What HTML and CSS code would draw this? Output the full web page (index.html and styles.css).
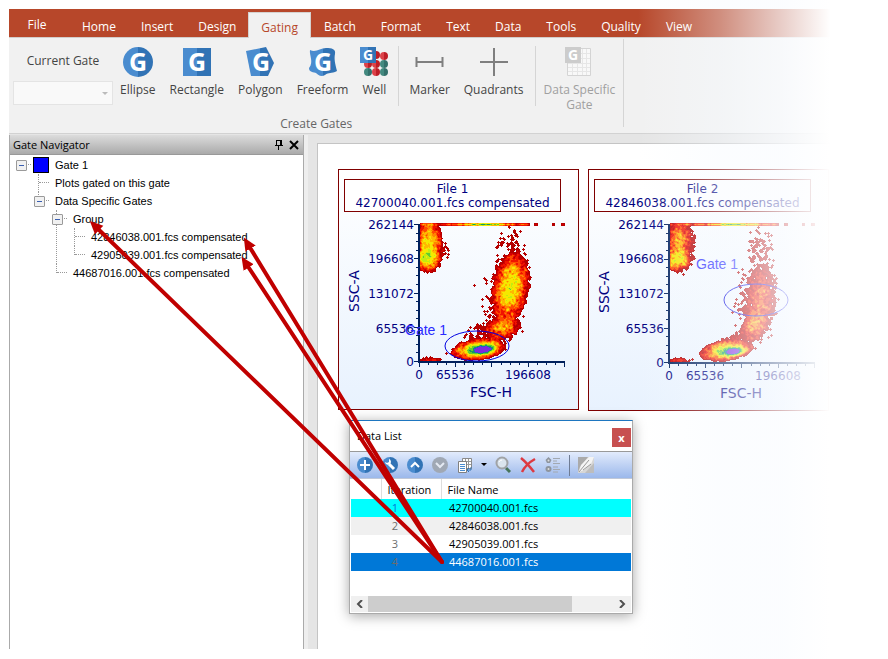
FILE: index.html
```html
<!DOCTYPE html>
<html lang="en">
<head>
<meta charset="utf-8">
<title>Gate Navigator</title>
<link rel="stylesheet" href="styles.css">
</head>
<body>
<svg width="0" height="0" class="defs" aria-hidden="true">
  <defs>
    <linearGradient id="half"><stop offset=".5" stop-color="#4a8ccf"/><stop offset=".5" stop-color="#3173b5"/></linearGradient>
    <linearGradient id="redhalf"><stop offset=".5" stop-color="#dc4249"/><stop offset=".5" stop-color="#be1e27"/></linearGradient>
    <linearGradient id="tealhalf"><stop offset=".5" stop-color="#43897f"/><stop offset=".5" stop-color="#33706b"/></linearGradient>
    <circle id="red" r="4" fill="url(#redhalf)"/>
    <circle id="teal" r="4" fill="url(#tealhalf)"/>
  </defs>
</svg>
<div class="app">
  <header>
    <nav class="tabs">
      <a class="file" href="#">File</a><a href="#">Home</a><a href="#">Insert</a><a href="#">Design</a><a class="active" href="#">Gating</a><a href="#">Batch</a><a href="#">Format</a><a href="#">Text</a><a href="#">Data</a><a href="#">Tools</a><a href="#">Quality</a><a href="#">View</a>
    </nav>
    <div class="ribbon">
      <section class="group">
        <div class="tools">
          <div class="current">
            <label for="gate">Current Gate</label>
            <div class="combo"><select id="gate" disabled><option></option></select></div>
          </div>
          <button class="tool"><svg width="32" height="32"><circle cx="16" cy="16" r="15" fill="url(#half)"/><text class="g" x="16" y="25">G</text></svg>Ellipse</button>
          <button class="tool"><svg width="32" height="32"><path d="M2 2h28v28H2z" fill="url(#half)"/><text class="g" x="16" y="25">G</text></svg>Rectangle</button>
          <button class="tool"><svg width="32" height="32"><path d="M2 5 22 1l8 16-6 13H7z" fill="url(#half)"/><text class="g" x="17" y="25">G</text></svg>Polygon</button>
          <button class="tool"><svg width="32" height="32"><path d="M3 4C9 7 13 2 19 2S29 3 28 8C27 13 28 17 30 25C24 28 22 26 18 29S10 28 9 27C4 26 2 25 2 22C7 16 2 9 3 4z" fill="url(#half)"/><text class="g" x="16" y="25">G</text></svg>Freeform</button>
          <button class="tool"><svg width="32" height="32"><use href="#red" x="18" y="9"/><use href="#red" x="26" y="10"/><use href="#red" x="10" y="18"/><use href="#red" x="18" y="18"/><use href="#teal" x="26" y="18"/><use href="#teal" x="10" y="26"/><use href="#red" x="18" y="26"/><use href="#teal" x="26" y="26"/><path d="M2 1h16v16H2z" fill="url(#half)"/><text class="g small" x="10" y="14">G</text></svg>Well</button>
          <span class="rule"></span>
          <button class="tool"><svg width="32" height="32"><path d="M2.500 11v10M28.500 11v10M2 16h27" stroke="#7f7f7f" stroke-width="2" fill="none"/></svg>Marker</button>
          <button class="tool"><svg width="32" height="32"><path d="M16 2v28M2 16h28" stroke="#7f7f7f" stroke-width="2"/></svg>Quadrants</button>
          <span class="rule"></span>
          <button class="tool wide" disabled><svg width="32" height="32"><path d="M4.500 2.500h23v27h-23z" fill="#f8f8f8" stroke="#d4d4d4"/><path d="M5 7.500h22M5 12.500h22M5 17.500h22M5 21.500h22M5 25.500h22M9.500 3v26M14.500 3v26M19.500 3v26M23.500 3v26" stroke="#e6e6e6"/><path d="M2 1h16v16H2z" fill="#ccc"/><text class="g small" x="10" y="14">G</text></svg>Data Specific Gate</button>
        </div>
        <h2>Create Gates</h2>
      </section>
    </div>
  </header>

  <div class="work">
    <aside class="navigator">
      <div class="nav-head"><h2>Gate Navigator</h2>
        <button aria-label="Pin"><svg width="10" height="10"><path d="M2.500 0v6M2 .5h6M6.500 0v6M7.500 0v6M1 5.500h8M4.500 6v4" stroke="#000"/></svg></button>
        <button aria-label="Close"><svg width="10" height="10"><path d="m1 1 8 8M9 1 1 9" stroke="#000" stroke-width="2"/></svg></button>
      </div>
      <ul class="tree">
        <li><div class="row open gate"><i class="swatch"></i>Gate 1</div>
          <ul>
            <li><div class="row">Plots gated on this gate</div></li>
            <li><div class="row open">Data Specific Gates</div>
              <ul>
                <li><div class="row open">Group</div>
                  <ul>
                    <li><div class="row">42846038.001.fcs compensated</div></li>
                    <li><div class="row">42905039.001.fcs compensated</div></li>
                  </ul>
                </li>
                <li><div class="row">44687016.001.fcs compensated</div></li>
              </ul>
            </li>
          </ul>
        </li>
      </ul>
    </aside>
    <main>
      <div class="sheet">
        <figure class="plot">
          <figcaption>File 1<br>42700040.001.fcs compensated</figcaption>
          <svg width="239" height="198" data-plot="0">
            <g class="dots" shape-rendering="crispEdges"></g>
            <path class="axis" d="M80 13v139M79 151h147"/><path class="ticks"/>
            <g class="num"><text x="75" y="18">262144</text><text x="75" y="52">196608</text><text x="75" y="87">131072</text><text x="75" y="122">65536</text><text x="75" y="155">0</text></g>
            <g class="mid"><text x="80" y="168">0</text><text x="116" y="168">65536</text><text x="189" y="168">196608</text><text class="name" x="152" y="186">FSC-H</text><text class="name" transform="translate(20 80) rotate(-90)">SSC-A</text></g>
            <ellipse class="ring" cx="138" cy="135" rx="32" ry="15"/><text class="label" x="66" y="124">Gate 1</text>
          </svg>
        </figure>
        <figure class="plot">
          <figcaption>File 2<br>42846038.001.fcs compensated</figcaption>
          <svg width="239" height="199" data-plot="1">
            <g class="dots" shape-rendering="crispEdges"></g>
            <path class="axis" d="M80 13v140M79 152h147"/><path class="ticks"/>
            <g class="num"><text x="75" y="18">262144</text><text x="75" y="52">196608</text><text x="75" y="87">131072</text><text x="75" y="122">65536</text><text x="75" y="156">0</text></g>
            <g class="mid"><text x="80" y="169">0</text><text x="116" y="169">65536</text><text x="189" y="169">196608</text><text class="name" x="152" y="187">FSC-H</text><text class="name" transform="translate(20 81) rotate(-90)">SSC-A</text></g>
            <ellipse class="ring" cx="167" cy="89" rx="32" ry="16"/><text class="label" x="107" y="58">Gate 1</text>
          </svg>
        </figure>
      </div>
    </main>
  </div>
  <div class="fade"></div>
</div>

<section class="window">
  <div class="title"><h2>Data List</h2><button aria-label="Close">x</button></div>
  <div class="bar">
    <button aria-label="Add"><svg width="18" height="18"><circle cx="9" cy="9" r="8" fill="url(#half)"/><path d="M9 4v10M4 9h10" stroke="#fff" stroke-width="2"/></svg></button>
    <button aria-label="Settings"><svg width="18" height="18"><circle cx="9" cy="9" r="8" fill="url(#half)"/><path d="m8 8 5 5" stroke="#fff" stroke-width="3"/><path d="M4 6a3 3 0 0 0 5 2 3 3 0 0 0-1-5v3L6 7z" fill="#fff"/></svg></button>
    <button aria-label="Move up"><svg width="18" height="18"><circle cx="9" cy="9" r="8" fill="url(#half)"/><path d="m5 11 4-4 4 4" stroke="#fff" stroke-width="2" fill="none"/></svg></button>
    <button aria-label="Move down"><svg width="18" height="18"><circle cx="9" cy="9" r="8" fill="#a0a8b4"/><path d="m5 7 4 4 4-4" stroke="#e4e9f2" stroke-width="2" fill="none"/></svg></button>
    <button aria-label="Copy"><svg width="18" height="18"><path d="M6.500 2.500h9v10h-9z" fill="#fff" stroke="#8a8a8a"/><path d="M7 5.500h8M7 8.500h8M9.500 3v9M12.500 3v9" stroke="#999"/><path d="M2.500 5.500h8v11h-8z" fill="#fff" stroke="#808080"/><path d="M4 8.500h5M4 10.500h5M4 12.500h5M4 14.500h5" stroke="#4a8ccf"/><path d="M15 11v3h-3m1-2-2 2 2 2" stroke="#3173b5" fill="none"/></svg></button>
    <button class="drop" aria-label="Copy options"><svg width="6" height="4"><path d="M0 0h6L3 3z"/></svg></button>
    <button aria-label="Find"><svg width="18" height="18"><path d="m12 12 4 4" stroke="#47745a" stroke-width="3"/><circle cx="8" cy="7" r="5.500" fill="#dbe5ee" stroke="#a0a3a6" stroke-width="2"/><path d="M5 6q1-2 3-2" stroke="#fff" fill="none"/></svg></button>
    <button aria-label="Delete"><svg width="18" height="18"><path d="M2 2q6 5 13 14M16 3Q7 8 3 16" stroke="#dd3a42" stroke-width="2.500" fill="none"/></svg></button>
    <button aria-label="Order"><svg width="18" height="18"><path d="m4.500 1 3 3-1.500 3h-3L1.500 4z" fill="#8e959e"/><circle cx="4.500" cy="13" r="3" fill="#8e959e"/><circle cx="4.500" cy="4.500" r="1" fill="#ddd"/><circle cx="4.500" cy="13" r="1" fill="#ddd"/><path d="M9 2.500h7M9 5h4M9 7.500h7M9 11h5M9 13.500h7M9 16h5" stroke="#a2a8b0"/></svg></button>
    <span class="split"></span>
    <button aria-label="Highlight"><svg width="18" height="18"><path d="M1 1h16v16H1z" fill="#d6d6d6"/><path d="M1 1h10L3 11l-2 5z" fill="#aaa"/><path d="M8 17h9V7z" fill="#bdbdbd"/><path d="m2 16 2-7 8-8h5l-3 7-7 6z" fill="#f4f4f4"/><path d="M2 16 12 4M6 14l8-6" stroke="#999" fill="none"/></svg></button>
  </div>
  <table>
    <thead><tr><th></th><th>Iteration</th><th>File Name</th></tr></thead>
    <tbody>
      <tr class="cyan"><td></td><td>1</td><td>42700040.001.fcs</td></tr>
      <tr class="alt"><td></td><td>2</td><td>42846038.001.fcs</td></tr>
      <tr><td></td><td>3</td><td>42905039.001.fcs</td></tr>
      <tr class="picked"><td></td><td>4</td><td>44687016.001.fcs</td></tr>
    </tbody>
  </table>
  <div class="scroll">
    <button aria-label="Scroll left"><svg width="7" height="8"><path d="M6 0 2 4l4 4" stroke="#505050" stroke-width="2" fill="none"/></svg></button>
    <span class="track"><span class="thumb"></span></span>
    <button aria-label="Scroll right"><svg width="7" height="8"><path d="m1 0 4 4-4 4" stroke="#505050" stroke-width="2" fill="none"/></svg></button>
  </div>
</section>

<svg class="arrows" width="660" height="600" aria-hidden="true">
  <defs><marker id="tip" markerUnits="userSpaceOnUse" markerWidth="14" markerHeight="14" refX="3" refY="6" orient="auto"><path d="M0 0 13 6 0 12z" fill="#c00000"/></marker></defs>
  <path d="M442 562 97 228" marker-end="url(#tip)"/>
  <path d="M442 562 249 246" marker-end="url(#tip)"/>
  <path d="M442 562 247 265" marker-end="url(#tip)"/>
</svg>
<script src="plots.js"></script>
</body>
</html>
```
FILE: styles.css
```css
* { box-sizing: border-box; }
body { margin: 0; background: #fff; font: 12px/16px "Open Sans", "Noto Sans", sans-serif; color: #444; }
h2, ul, figure { margin: 0; padding: 0; font: inherit; list-style: none; }
button { border: 0; background: none; padding: 0; font: inherit; color: inherit; }
svg { display: block; }
.defs { position: absolute; }
.app { position: relative; display: flex; flex-direction: column; height: 100vh; min-height: 600px; padding: 9px 0 10px 9px; overflow: hidden; }

.tabs { display: flex; align-items: flex-end; height: 29px; background: #b7472a; border-bottom: 1px solid #d2cdcb; }
.tabs a { height: 25px; padding: 7px 12px 0 13px; color: #fff; text-decoration: none; }
.tabs .file { width: 60px; padding: 5px 4px 0 0; text-align: center; }
.tabs .active { height: 26px; margin-bottom: -1px; padding: 7px 12px 0; background: #f1f1f1; border: 1px solid #d5d2d0; border-bottom: 0; color: #b7472a; }
.ribbon { display: flex; height: 96px; background: #f1f1f1; border-bottom: 1px solid #d2d2d2; }
.group { display: flex; flex-direction: column; margin: 1px 0 6px; padding-top: 7px; border-right: 1px solid #d5d5d5; }
.group h2 { text-align: center; color: #666; margin-top: auto; margin-bottom: -5px; }
.tools { display: flex; align-items: flex-start; padding: 0 4px; }
.current { width: 100px; text-align: center; padding-top: 7px; }
.combo { position: relative; margin-top: 12px; }
.combo select { display: block; width: 100%; height: 24px; appearance: none; background: #fdfdfd; border: 1px solid #dfdfdf; }
.combo::after { content: ""; position: absolute; right: 5px; top: 11px; border: 3px solid transparent; border-top-color: #bbb; border-bottom: 0; }
.tool { display: flex; flex-direction: column; align-items: center; line-height: 15px; padding: 0 7px; }
.tool svg { margin: 0 -4px 4px; overflow: visible; }
.tool.wide { width: 80px; padding: 0; color: #a0a0a0; }
.rule { width: 1px; height: 60px; background: #d5d5d5; margin: 0 3px 0 5px; }
.g { font: bold 25px "Open Sans", sans-serif; fill: #fff; text-anchor: middle; }
.g.small { font-size: 14px; }

.work { display: flex; flex: 1; min-height: 0; padding-top: 1px; background: #e5e5e5; }
.navigator { width: 295px; flex: none; background: #fff; border: solid #aaa; border-width: 0 1px; color: #000; font: 11px/18px "Liberation Sans", Arial, sans-serif; }
.nav-head { display: flex; align-items: center; gap: 5px; height: 20px; padding: 0 4px 0 3px; background: linear-gradient(#dcdcdc, #aaa); border-bottom: 1px solid #999; font: 11px/18px "Open Sans", sans-serif; }
.nav-head h2 { flex: 1; }
.tree { padding: 1px 0 0 10px; }
.tree ul { margin-left: 18px; }
.tree li { position: relative; }
.tree li li::before { content: ""; position: absolute; left: 0; top: 0; bottom: 0; border-left: 1px dotted #999; }
.tree li li:last-child::before { bottom: auto; height: 9px; }
.row { position: relative; height: 18px; padding-left: 17px; }
.row::before { content: ""; position: absolute; left: 1px; top: 8px; width: 10px; border-top: 1px dotted #999; }
.open::after { content: ""; position: absolute; left: -4px; top: 4px; width: 9px; height: 9px; border: 1px solid #9a9a9a; border-radius: 1px; background: linear-gradient(#3a5fb0, #3a5fb0) center / 5px 1px no-repeat #f1f1f1; }
.gate { display: flex; align-items: center; gap: 6px; padding-left: 13px; }
.swatch { width: 16px; height: 16px; background: #00f; border: 1px solid #000; }
main { flex: 1; min-width: 0; display: flex; padding: 8px 0 0 9px; border-left: 4px solid #eee; }
.sheet { flex: 1; min-width: 0; display: flex; align-items: flex-start; gap: 9px; padding: 25px 0 0 20px; background: #fff; border: solid #c4c4c4; border-width: 1px 0 0 1px; overflow: hidden; }
.plot { flex: none; border: 1px solid #800000; background: linear-gradient(#fff, #e8f2fe); color: #000080; font: 12px/14px "DejaVu Sans", Verdana, sans-serif; }
.plot figcaption { width: 217px; height: 33px; margin: 9px 0 0 5px; padding-top: 2px; border: 1px solid #800000; background: #fff; text-align: center; white-space: nowrap; }
.plot svg { margin-top: -1px; }
.plot text { fill: #000080; }
.num { text-anchor: end; }
.mid { text-anchor: middle; }
.plot .name { font-size: 14px; }
.plot .label { font: 14px "Liberation Sans", Arial, sans-serif; fill: #2a2aff; }
.axis { stroke: #00205c; stroke-width: 2; fill: none; }
.ticks { stroke: #00205c; }
.ring { fill: none; stroke: #0000e0; }
.fade { position: absolute; inset: 0 0 0 auto; width: 250px; pointer-events: none; background: linear-gradient(90deg, rgba(246,250,255,0), rgba(246,250,255,.4) 33%, rgba(250,252,255,.75) 58%, #fff 77%); }

.window { position: absolute; left: 349px; top: 420px; width: 284px; padding: 0 1px 1px; background: #fff; border: 1px solid #aaa; border-top-color: #1e76c0; box-shadow: 0 2px 12px rgba(0,0,0,.35); color: #000; font-size: 11px; line-height: 18px; }
.title { display: flex; justify-content: space-between; align-items: center; height: 30px; padding: 0 0 0 6px; }
.title button { width: 19px; height: 19px; margin-top: 3px; background: #c75050; color: #fff; font-weight: bold; line-height: 16px; }
.bar { display: flex; align-items: center; gap: 7px; height: 28px; margin: 0 -1px; padding: 0 6px; background: linear-gradient(#e2ebfc, #9bb8eb); border-top: 1px solid #999; border-bottom: 1px solid #c0c8d8; }
.split { width: 1px; height: 21px; background: #6f7c94; }
table { width: 100%; border-collapse: collapse; table-layout: fixed; }
th, td { height: 18px; padding: 0; font-weight: normal; text-align: left; }
th { height: 20px; border-right: 1px solid #ddd; padding: 1px 0 0 6px; }
th:last-child { border: 0; }
th:first-child { width: 30px; }
th:nth-child(2) { width: 60px; }
td:nth-child(2) { padding-right: 43px; text-align: right; color: #6c6c6c; }
td:nth-child(3) { padding-left: 8px; }
.cyan { background: #0ff; }
.cyan td:nth-child(2) { color: #0078d7; }
.alt { background: #f0f0f0; }
.picked { background: #0078d7; color: #fff; }
.scroll { display: flex; height: 16px; margin-top: 25px; background: #f0f0f0; }
.scroll button { width: 17px; display: grid; place-items: center; }
.track { flex: 1; display: flex; }
.thumb { width: 83%; background: #cdcdcd; }
.arrows { position: absolute; left: 0; top: 0; pointer-events: none; stroke: #c00000; stroke-width: 4; stroke-linecap: round; fill: none; }
.arrows marker { stroke: none; }
```
FILE: plots.js
```js
const W = 146, H = 139, LEFT = 81, TOP = 12;
// Each cluster: x, y, spread x, spread y, events, slope, cut-off radius
const clusters = [
  [
    [6, 35, 7, 6, 1200, 0, 2.000], [8, 16, 6, 10, 1100, 0, 2.200], [9, 24, 7, 13, 800, 0, 2],
    [90, 64, 8, 16, 3600, -0.120, 2.200], [90, 60, 10, 20, 600, -0.100, 2.000], [84, 84, 10, 14, 150, 0, 2.500],
    [89, 20, 7, 9, 45, 0, 2.500], [83, 104, 8, 6, 800, -0.200, 2.100], [66, 109, 12, 7, 170, -0.300, 2],
    [58, 126, 12, 4.500, 2300, -0.100, 2.200], [62, 126, 7, 2.500, 1500, -0.120, 2.200], [63, 126, 4, 1.500, 700, -0.100, 2], [56, 123, 15, 5, 250, -0.200, 2],
    [8, 137, 8, 1.500, 60, -0.100, 2], [70, 80, 8, 25, 22, 0, 3], [24, 30, 3, 8, 14, 0, 2]
  ],
  [
    [6, 36, 7, 5.500, 1000, 0, 2.000], [8, 16, 6, 10, 800, 0, 2.200], [11, 24, 7, 13, 500, 0, 2.100],
    [90, 76, 7, 16, 1000, -0.050, 2.200], [87, 70, 9, 24, 280, 0, 2.400], [90, 25, 7, 10, 60, 0, 2.500],
    [84, 102, 6, 7, 600, -0.200, 2.200], [74, 90, 7, 12, 35, 0, 2],
    [56, 127, 12, 4.500, 1900, -0.120, 2.200], [62, 128, 7, 2.500, 1200, -0.120, 2.200], [63, 128, 4, 1.500, 500, -0.100, 2], [60, 120, 15, 5, 180, -0.300, 2],
    [8, 137, 8, 1, 50, 0, 2]
  ]
];
const palette = [[0.28, "#b40000"], [1.2, "#d40000"], [2, "#f01400"], [3.4, "#ff4a00"], [5, "#ff8500"],
  [6.6, "#ffb800"], [8.6, "#f5e800"], [12.5, "#c4ec10"], [16, "#62cc30"], [22, "#159b60"], [29, "#2060c8"], [36, "#7b2be0"]];

let seed = 7;
const rand = () => (seed = (seed * 16807) % 2147483647) / 2147483647;
const normal = () => Math.sqrt(-2 * Math.log(rand())) * Math.cos(6.28318 * rand());

function density(list) {
  const raw = new Float32Array(W * H);
  const add = (x, y, v) => {
    x = Math.round(x); y = Math.round(y);
    if (x >= 0 && y >= 0 && x < W && y < H) raw[y * W + x] += v;
  };
  for (const [cx, cy, sx, sy, n, slope, cut] of list)
    for (let i = 0; i < n; i++) {
      let u, v;
      do { u = normal(); v = normal(); } while (Math.hypot(u, v) > cut);
      // Lopsided offset keeps sloped populations leaning
      const steep = sy > sx;
      add(cx + u * sx + (steep ? slope * v * sy : 0), cy + v * sy + (steep ? 0 : slope * u * sx), 1);
    }
  for (let i = 0; i < 330; i++) add(rand() * 108, 1, 1);
  for (let i = 0; i < 500; i++) add(64 + normal() * 13, 1, 1);
  for (const x of [115, 116, 133, 142, 143]) add(x, 1, 2);
  const out = new Float32Array(W * H);
  for (let y = 0; y < H; y++) for (let x = 0; x < W; x++) {
    let s = 0;
    for (let j = -1; j < 2; j++) for (let i = -1; i < 2; i++) {
      const a = x + i, b = y + j;
      if (a >= 0 && b >= 0 && a < W && b < H) s += raw[b * W + a] * (2 - Math.abs(i)) * (2 - Math.abs(j)) / 7;
    }
    out[y * W + x] = s;
  }
  return out;
}

document.querySelectorAll("[data-plot]").forEach(svg => {
  const k = +svg.dataset.plot, grid = density(clusters[k]), paths = palette.map(() => "");
  for (let y = 0; y < H; y++) for (let x = 0; x < W; x++) {
    let c = -1;
    while (c + 1 < palette.length && grid[y * W + x] >= palette[c + 1][0]) c++;
    if (c >= 0) paths[c] += `M${LEFT + x} ${TOP + y}h1v1h-1z`;
  }
  svg.querySelector(".dots").innerHTML = paths.map((d, i) => `<path d="${d}" fill="${palette[i][1]}"/>`).join("");
  let t = "";
  for (let i = 0; i <= 16; i++) {
    const len = i % 4 ? 3 : 5, y = Math.round(13 + i * (137 + k) / 16) + 0.5, x = Math.round(80 + i * 9.06) + 0.5;
    t += `M${80 - len} ${y}H80M${x} ${151 + k}v${len}`;
  }
  svg.querySelector(".ticks").setAttribute("d", t);
});
```
